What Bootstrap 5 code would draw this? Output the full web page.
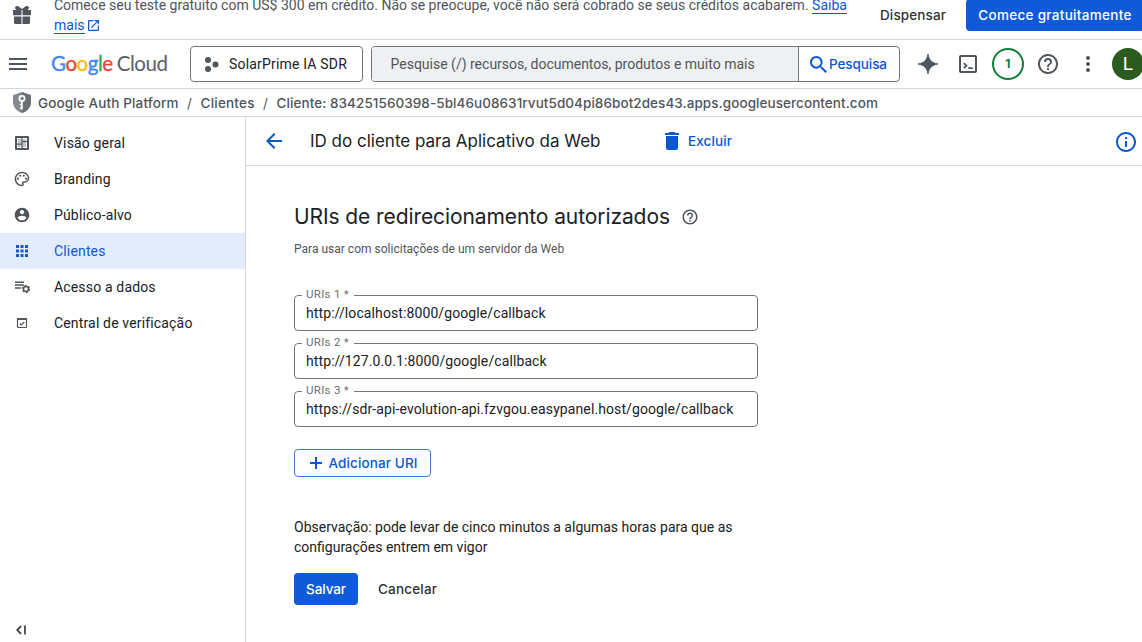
<!DOCTYPE html>
<html lang="pt-BR">
<head>
<meta charset="utf-8">
<meta name="viewport" content="width=device-width, initial-scale=1">
<title>ID do cliente para Aplicativo da Web</title>
<link rel="stylesheet" href="https://cdn.jsdelivr.net/npm/bootstrap@5.3.0/dist/css/bootstrap.min.css">
<style>
body{font:400 14px/20px Roboto,sans-serif;letter-spacing:.12px;color:#202124;height:642px;overflow:hidden;background:#fff}
svg{display:block;flex:none;fill:currentColor}
.gs{font-family:Inter,Roboto,sans-serif;font-size:13.5px}
.md{font-weight:500}
.mut{color:#50555b}
.blu{color:#0b57d0}
.nw{white-space:nowrap}
.line-b{border-bottom:1px solid #d2d5da}
.promo{height:40px}
.gift{margin:5px 0 0 12px}
.promo-txt{width:804px;margin:-5px 0 0 22px;letter-spacing:0}
.promo-txt a{color:#0b57d0;text-decoration:none;border-bottom:1px solid #0b57d0}
.dismiss{margin:5px 0 0 22px;width:86px;color:#303338}
.btn-g{letter-spacing:inherit;line-height:20px;border-radius:4px;padding:0;display:flex;align-items:center;white-space:nowrap;background:#fff;color:#202124}
.btn-fill{background:#0f5bd7;color:#fff;border:0;height:32px;justify-content:center}
.start{width:178px;margin-top:-1px;flex:none;letter-spacing:.3px}
.topbar{height:49px}
.menu{margin-left:9px}
.logo{font:400 20.5px/24px Lato,sans-serif;letter-spacing:-.45px;word-spacing:-.8px;margin:-2px 0 0 24px;width:117px;flex:none;color:#5b6066}
.logo span{-webkit-text-stroke:.35px currentColor}
.picker{width:173px;height:36px;border:1px solid #70757b;margin-left:22px;padding-left:13px;font-size:14px;letter-spacing:.18px;gap:10px;flex:none}
.search{width:529px;height:36px;border:1px solid #70757b;border-radius:4px;margin-left:8px;overflow:hidden;flex:none}
.search .fld{width:427px;background:#eff0f2;border-right:1px solid #70757b;padding-left:18.500px;letter-spacing:0}
.search .go{padding-left:11px;gap:2px;letter-spacing:-.08px}
.avatar-l{width:32px;height:32px;background:#2b5b1f;color:#fff;font-size:19px;margin-left:22px}
.notif{width:32px;height:32px;border:2px solid #137a37;color:#137a37;font-size:12px;margin:0 12px 0 15px}
.crumbs{height:28px}
.shield{margin:0 7px 0 13px}
.crumbs .sep{width:22px;text-align:center;font-weight:400}
.side{width:246px;border-right:1px solid #d2d5da;padding-top:8px}
.side a{height:36px;color:#202124;text-decoration:none;padding-left:14px;gap:24px;letter-spacing:.16px}
.side a svg{color:#50555b}
.side a.active,.side a.active svg{background:#e2ecfd;color:#1558d0}
.side .fold{margin:0 0 7px 16px}
.actions{height:49px;padding:0 4px 0 19px}
.actions h1{font-size:17px;font-weight:400;line-height:24px;letter-spacing:0;margin:0 65px 0 27px;width:290px}
.info{margin-top:2px}
.content{padding:37px 0 0 48px}
.content h2{font-size:21px;line-height:28px;font-weight:400;letter-spacing:-.09px;width:376px}
.hint{font-size:12px;line-height:16px;margin:10px 0 38px;letter-spacing:.01px}
.field{width:464px;height:36px;border:1px solid #70757b;border-radius:4px;padding-left:11px;margin-bottom:12px;letter-spacing:.1px}
.field label{position:absolute;left:7px;top:-10px;background:#fff;width:52px;padding-left:4px;font-size:11.500px;line-height:16px;letter-spacing:.3px;color:#6a6f75;white-space:nowrap}
.add{margin-top:22px;width:137px;height:28px;border:1px solid #3f76d4;padding-left:15px;gap:6.500px;color:#0b57d0}
.note{margin:40px 0 16px;letter-spacing:0}
</style>
</head>
<body class="d-flex flex-column">
<div class="promo d-flex line-b flex-shrink-0">
  <svg class="gift mut" width="20" height="20" viewBox="0 0 20 20"><path d="M1 5h3.500L2.800 3l1-1.700L6 1l4 3 4-3 2.200.3 1 1.700L15.500 5H19v5.200h-8.500V5h-1v5.200H1zM2 11.500h7.500V19H3.500A1.500 1.500 0 0 1 2 17.500zM10.500 11.500H18v6a1.500 1.500 0 0 1-1.500 1.500h-6z"/></svg>
  <div class="promo-txt mut flex-shrink-0"><span class="nw">Comece seu teste gratuito com US$ 300 em crédito. Não se preocupe, você não será cobrado se seus créditos acabarem. <a href="#">Saiba</a></span><div class="d-flex align-items-center"><div><a href="#">mais</a></div><svg class="blu" style="margin-left:3px" width="11" height="11" viewBox="3 3 18 18"><path d="M19 19H5V5h7V3H5a2 2 0 0 0-2 2v14a2 2 0 0 0 2 2h14a2 2 0 0 0 2-2v-7h-2v7zM14 3v2h3.590l-9.830 9.830 1.410 1.410L19 6.410V10h2V3h-7z"/></svg></div></div>
  <div class="dismiss gs md flex-shrink-0">Dispensar</div>
  <button class="btn btn-g btn-fill start gs md">Comece gratuitamente</button>
</div>

<header class="topbar d-flex align-items-center line-b flex-shrink-0">
  <svg class="menu mut" width="18" height="12" viewBox="0 0 18 12"><path d="M0 0h18v2H0zM0 5h18v2H0zM0 10h18v2H0z"/></svg>
  <div class="logo nw"><span style="color:#4285f4">G</span><span style="color:#ea4335">o</span><span style="color:#fbbc04">o</span><span style="color:#4285f4">g</span><span style="color:#34a853">l</span><span style="color:#ea4335">e</span> Cloud</div>
  <button class="btn btn-g picker"><svg class="mut" width="15" height="15" viewBox="0 0 15 15"><circle cx="4" cy="3" r="3"/><circle cx="11.500" cy="7.500" r="3"/><circle cx="4" cy="12" r="3"/></svg>SolarPrime IA SDR</button>
  <div class="search d-flex"><div class="fld d-flex align-items-center mut nw">Pesquise (/) recursos, documentos, produtos e muito mais</div>
  <div class="go d-flex align-items-center blu gs md"><svg width="17" height="17" viewBox="3 3 17.500 17.500"><path d="M15.500 14h-.79l-.28-.27A6.470 6.470 0 0 0 16 9.500 6.500 6.500 0 1 0 9.500 16c1.610 0 3.090-.59 4.230-1.570l.27.28v.79l5 4.990L20.490 19l-4.990-5zm-6 0C7.010 14 5 11.990 5 9.500S7.010 5 9.500 5 14 7.010 14 9.500 11.990 14 9.500 14z"/></svg>Pesquisa</div></div>
  <div class="d-flex align-items-center mut flex-shrink-0" style="margin-left:18px">
    <svg width="20" height="20" viewBox="0 0 20 20"><path d="M10 0c1 6 4 9 10 10-6 1-9 4-10 10C9 14 6 11 0 10 6 9 9 6 10 0z" stroke="currentColor" stroke-width=".8"/></svg>
    <svg width="18" height="18" viewBox="0 0 18 18" style="margin-left:21px"><rect x="1" y="1" width="16" height="16" rx="1" fill="none" stroke="currentColor" stroke-width="2"/><path d="M4.800 8.200l2.700 2.500-2.700 2.500M9.300 13.200h4.500" fill="none" stroke="currentColor" stroke-width="1.800"/></svg>
    <div class="notif rounded-circle d-flex align-items-center justify-content-center gs fw-bold">1</div>
    <svg width="24" height="24" viewBox="0 0 24 24"><use href="#help"/></svg>
    <svg width="4" height="16" viewBox="0 0 4 16" style="margin-left:26px"><circle cx="2" cy="2" r="2"/><circle cx="2" cy="8" r="2"/><circle cx="2" cy="14" r="2"/></svg>
  </div>
  <div class="avatar-l rounded-circle d-flex align-items-center justify-content-center flex-shrink-0">L</div>
</header>

<nav class="crumbs d-flex align-items-center line-b flex-shrink-0 gs md mut nw">
  <svg class="shield" width="18" height="21" viewBox="0 0 18 21"><path d="M9 0l9 3.300V10c0 5-3.500 9-9 11-5.500-2-9-6-9-11V3.300z" fill="#85898e"/><path d="M9 0l9 3.300V10c0 5-3.500 9-9 11z" fill="#6a6f74"/><circle cx="9" cy="6.500" r="2.600" fill="none" stroke="#fff" stroke-width="1.700"/><path d="M9 9v8.500M9 12.500H6.800M9 16H6.800" fill="none" stroke="#fff" stroke-width="1.700"/></svg>
  <span style="letter-spacing:.13px">Google Auth Platform</span><span class="sep">/</span><span style="letter-spacing:.2px">Clientes</span><span class="sep">/</span><span style="letter-spacing:.065px">Cliente: 834251560398-5bl46u08631rvut5d04pi86bot2des43.apps.googleusercontent.com</span>
</nav>

<div class="d-flex flex-grow-1">
  <aside class="side d-flex flex-column flex-shrink-0">
    <a href="#" class="d-flex align-items-center"><svg width="16" height="16" viewBox="0 0 16 16"><path fill-rule="evenodd" d="M2 1h12a1 1 0 0 1 1 1v12a1 1 0 0 1-1 1H2a1 1 0 0 1-1-1V2a1 1 0 0 1 1-1zM3 3v10h10V3z"/><path d="M7.400 3h1.200v10H7.400zM3 8.500h5v1.200H3zM8.500 6H13v1.200H8.500z"/><path d="M4 4h3.400v4.500H4zM8.600 4H12v2H8.600zM8.600 7.200H12V12H8.600zM4 9.700h3.400V12H4z" fill-opacity=".35"/></svg><span>Visão geral</span></a>
    <a href="#" class="d-flex align-items-center"><svg width="16" height="16" viewBox="1 1 22 22"><path d="M12 22C6.490 22 2 17.510 2 12S6.490 2 12 2s10 4.040 10 9c0 3.310-2.690 6-6 6h-1.770c-.28 0-.5.22-.5.5 0 .12.05.23.13.33.41.47.64 1.060.64 1.670A2.500 2.500 0 0 1 12 22zm0-18c-4.410 0-8 3.590-8 8s3.590 8 8 8c.28 0 .5-.22.5-.5a.54.54 0 0 0-.14-.35c-.41-.46-.63-1.050-.63-1.650a2.500 2.500 0 0 1 2.500-2.500H16c2.210 0 4-1.790 4-4 0-3.860-3.590-7-8-7z"/><circle cx="6.500" cy="11.500" r="1.500"/><circle cx="9.500" cy="7.500" r="1.500"/><circle cx="14.500" cy="7.500" r="1.500"/><circle cx="17.500" cy="11.500" r="1.500"/></svg><span>Branding</span></a>
    <a href="#" class="d-flex align-items-center"><svg width="16" height="16" viewBox="1 1 22 22"><path d="M12 2C6.480 2 2 6.480 2 12s4.480 10 10 10 10-4.480 10-10S17.520 2 12 2zm0 3c1.660 0 3 1.340 3 3s-1.340 3-3 3-3-1.340-3-3 1.340-3 3-3zm0 14.200c-2.500 0-4.710-1.280-6-3.220.03-1.990 4-3.080 6-3.080 1.990 0 5.970 1.090 6 3.080-1.290 1.940-3.500 3.220-6 3.220z"/></svg><span>Público-alvo</span></a>
    <a href="#" class="d-flex align-items-center active"><svg width="16" height="16" viewBox="0 0 16 16"><path d="M2 2h3v3H2zM6.500 2h3v3h-3zM11 2h3v3h-3zM2 6.500h3v3H2zM6.500 6.500h3v3h-3zM11 6.500h3v3h-3zM2 11h3v3H2zM6.500 11h3v3h-3zM11 11h3v3h-3z"/></svg><span>Clientes</span></a>
    <a href="#" class="d-flex align-items-center"><svg width="16" height="16" viewBox="0 0 16 16"><path d="M1 2.500h9V4H1zM1 5.300h9v1.500H1zM1 8.200h6v1.500H1z"/><circle cx="12" cy="10" r="2.500" fill="none" stroke="currentColor" stroke-width="1.500"/><circle cx="12" cy="10" r="3.600" fill="none" stroke="currentColor" stroke-width="1.100" stroke-dasharray="1.900 1.870"/></svg><span>Acesso a dados</span></a>
    <a href="#" class="d-flex align-items-center"><svg width="16" height="16" viewBox="0 0 16 16"><rect x="3.500" y="3.500" width="9" height="9" rx=".8" fill="none" stroke="currentColor" stroke-width="1.200"/><path d="M3 3h10v2H3z"/><path d="M5.700 8.500l1.600 1.500 3-3" fill="none" stroke="currentColor" stroke-width="1.200"/></svg><span>Central de verificação</span></a>
    <svg class="fold mt-auto" width="12" height="10" viewBox="0 0 12 10"><path d="M5 1.200L1.300 5 5 8.800" fill="none" stroke="#303338" stroke-width="1.700"/><path d="M8.200.5h1.500v9H8.200z"/></svg>
  </aside>
  <main class="flex-grow-1">
    <div class="actions d-flex align-items-center line-b">
      <svg class="blu" width="18" height="18" viewBox="3 3 18 18"><path d="M20 11H7.830l5.590-5.590L12 4l-8 8 8 8 1.410-1.410L7.830 13H20z"/></svg>
      <h1 class="gs nw">ID do cliente para Aplicativo da Web</h1>
      <svg class="blu" width="14" height="18" viewBox="5 3 14 18"><path d="M6 19c0 1.100.9 2 2 2h8c1.100 0 2-.9 2-2V7H6v12zM19 4h-3.500l-1-1h-5l-1 1H5v2h14V4z"/></svg>
      <span class="gs md blu" style="margin-left:9px">Excluir</span>
      <svg class="info blu ms-auto" width="24" height="24" viewBox="0 0 24 24"><path d="M11 7h2v2h-2zm0 4h2v6h-2zm1-9C6.480 2 2 6.480 2 12s4.480 10 10 10 10-4.480 10-10S17.520 2 12 2zm0 18c-4.410 0-8-3.590-8-8s3.590-8 8-8 8 3.590 8 8-3.590 8-8 8z"/></svg>
    </div>
    <div class="content">
      <div class="d-flex align-items-center"><h2 class="gs m-0 nw">URIs de redirecionamento autorizados</h2>
      <svg class="mut" width="18" height="18" viewBox="0 0 24 24" style="margin-left:11px"><path id="help" d="M11 18h2v-2h-2v2zm1-16C6.480 2 2 6.480 2 12s4.480 10 10 10 10-4.480 10-10S17.520 2 12 2zm0 18c-4.410 0-8-3.590-8-8s3.590-8 8-8 8 3.590 8 8-3.590 8-8 8zm0-14a4 4 0 0 0-4 4h2c0-1.100.9-2 2-2s2 .9 2 2c0 2-3 1.750-3 5h2c0-2.250 3-2.500 3-5a4 4 0 0 0-4-4z"/></svg></div>
      <p class="hint mut">Para usar com solicitações de um servidor da Web</p>
      <div class="field d-flex align-items-center position-relative"><label>URIs 1 *</label><span>http://localhost:8000/google/callback</span></div>
      <div class="field d-flex align-items-center position-relative"><label>URIs 2 *</label><span>http://127.0.0.1:8000/google/callback</span></div>
      <div class="field d-flex align-items-center position-relative"><label>URIs 3 *</label><span>https://sdr-api-evolution-api.fzvgou.easypanel.host/google/callback</span></div>
      <button class="btn btn-g add gs md"><svg width="12" height="12" viewBox="0 0 12 12"><path d="M5 0h2v5h5v2H7v5H5V7H0V5h5z"/></svg>Adicionar URI</button>
      <p class="note">Observação: pode levar de cinco minutos a algumas horas para que as<br>configurações entrem em vigor</p>
      <div class="d-flex"><button class="btn btn-g btn-fill gs md" style="width:64px;letter-spacing:-.08px">Salvar</button><button class="btn btn-g border-0 gs md" style="margin-left:20px;letter-spacing:.18px;color:#303338">Cancelar</button></div>
    </div>
  </main>
</div>
<script src="https://cdn.jsdelivr.net/npm/bootstrap@5.3.0/dist/js/bootstrap.bundle.min.js"></script>
</body>
</html>
